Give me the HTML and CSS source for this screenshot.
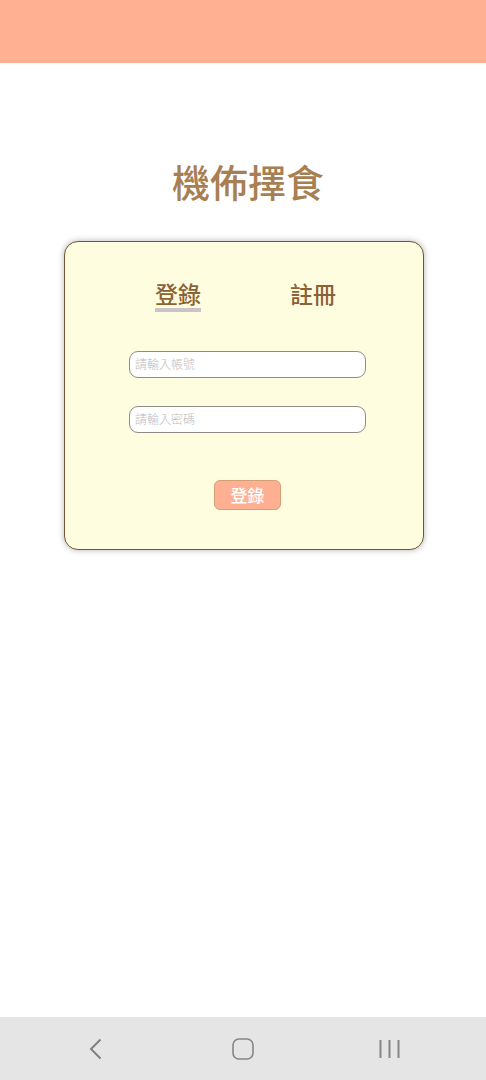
FILE: index.html
```html
<!DOCTYPE html>
<html lang="zh-Hant">
<head>
<meta charset="utf-8">
<meta name="viewport" content="width=device-width, initial-scale=1">
<title>機佈擇食</title>
<link rel="stylesheet" href="styles.css">
</head>
<body>
<header class="top-bar"></header>
<main class="page">
  <h1 class="title">機佈擇食</h1>
  <section class="card">
    <nav class="tabs">
      <button type="button" class="tab tab-active">登錄</button>
      <button type="button" class="tab">註冊</button>
    </nav>
    <form class="form">
      <input class="field" type="text" placeholder="請輸入帳號" aria-label="請輸入帳號">
      <input class="field" type="password" placeholder="請輸入密碼" aria-label="請輸入密碼">
      <button type="button" class="submit">登錄</button>
    </form>
  </section>
</main>
<nav class="system-nav">
  <button type="button" class="nav-button" aria-label="返回">
    <svg width="24" height="24" viewBox="0 0 24 24"><path d="M16.5 2.500 7 12l9.500 9.500" fill="none" stroke="#808080" stroke-width="2"/></svg>
  </button>
  <button type="button" class="nav-button" aria-label="主畫面">
    <svg width="24" height="24" viewBox="0 0 24 24"><rect x="2" y="2" width="20" height="20" rx="6" fill="none" stroke="#858585" stroke-width="1.600"/></svg>
  </button>
  <button type="button" class="nav-button" aria-label="最近使用">
    <svg width="24" height="24" viewBox="0 0 24 24"><path d="M2.500 3v18M11.500 3v18M20.500 3v18" fill="none" stroke="#858585" stroke-width="2"/></svg>
  </button>
</nav>
</body>
</html>
```

FILE: styles.css
```css
* {
  box-sizing: border-box;
}

body {
  margin: 0;
  min-height: 100vh;
  display: flex;
  flex-direction: column;
  background: #fff;
  font-family: "Noto Sans CJK TC", sans-serif;
}

button,
input {
  font-family: inherit;
}

button {
  padding: 0;
  border: 0;
  background: none;
}

.top-bar {
  height: 63px;
  background: #ffb092;
}

.page {
  flex: 1;
  padding: 90px 62px 0 64px;
}

.title {
  margin: 0 0 32px;
  padding-left: 8px;
  font-size: 38px;
  line-height: 56px;
  font-weight: 500;
  text-align: center;
  color: #a87e53;
}

.card {
  padding: 36px 57px 39px 64px;
  border: 1px solid #725634;
  border-radius: 14px;
  background: #fffddf;
  box-shadow: 0 0 6px rgba(0, 0, 0, 0.3);
}

.tabs {
  display: flex;
  justify-content: space-between;
  padding: 0 30px 0 26px;
}

.tab {
  height: 34px;
  border-bottom: 4px solid transparent;
  font-size: 23px;
  line-height: 30px;
  font-weight: 500;
  color: #8b6136;
}

.tab-active {
  border-color: #c9c4c9;
}

.form {
  display: flex;
  flex-direction: column;
  align-items: center;
  gap: 28px;
  padding-top: 39px;
}

.field {
  width: 100%;
  height: 27px;
  padding: 0 5px 2px;
  border: 1px solid #8f8c88;
  border-radius: 9px;
  background: #fff;
  font-size: 12px;
  color: #555;
}

.field::placeholder {
  color: #bdbac0;
  font-weight: 300;
  opacity: 1;
}

.submit {
  width: 67px;
  height: 30px;
  margin-top: 19px;
  border: 1px solid #d39f74;
  border-radius: 6px;
  background: #ffb092;
  font-size: 17px;
  line-height: 28px;
  font-weight: 500;
  color: #fff;
}

.system-nav {
  display: flex;
  justify-content: space-around;
  align-items: center;
  height: 63px;
  padding: 0 23px;
  background: #e5e5e5;
}

.nav-button {
  height: 24px;
}
```
